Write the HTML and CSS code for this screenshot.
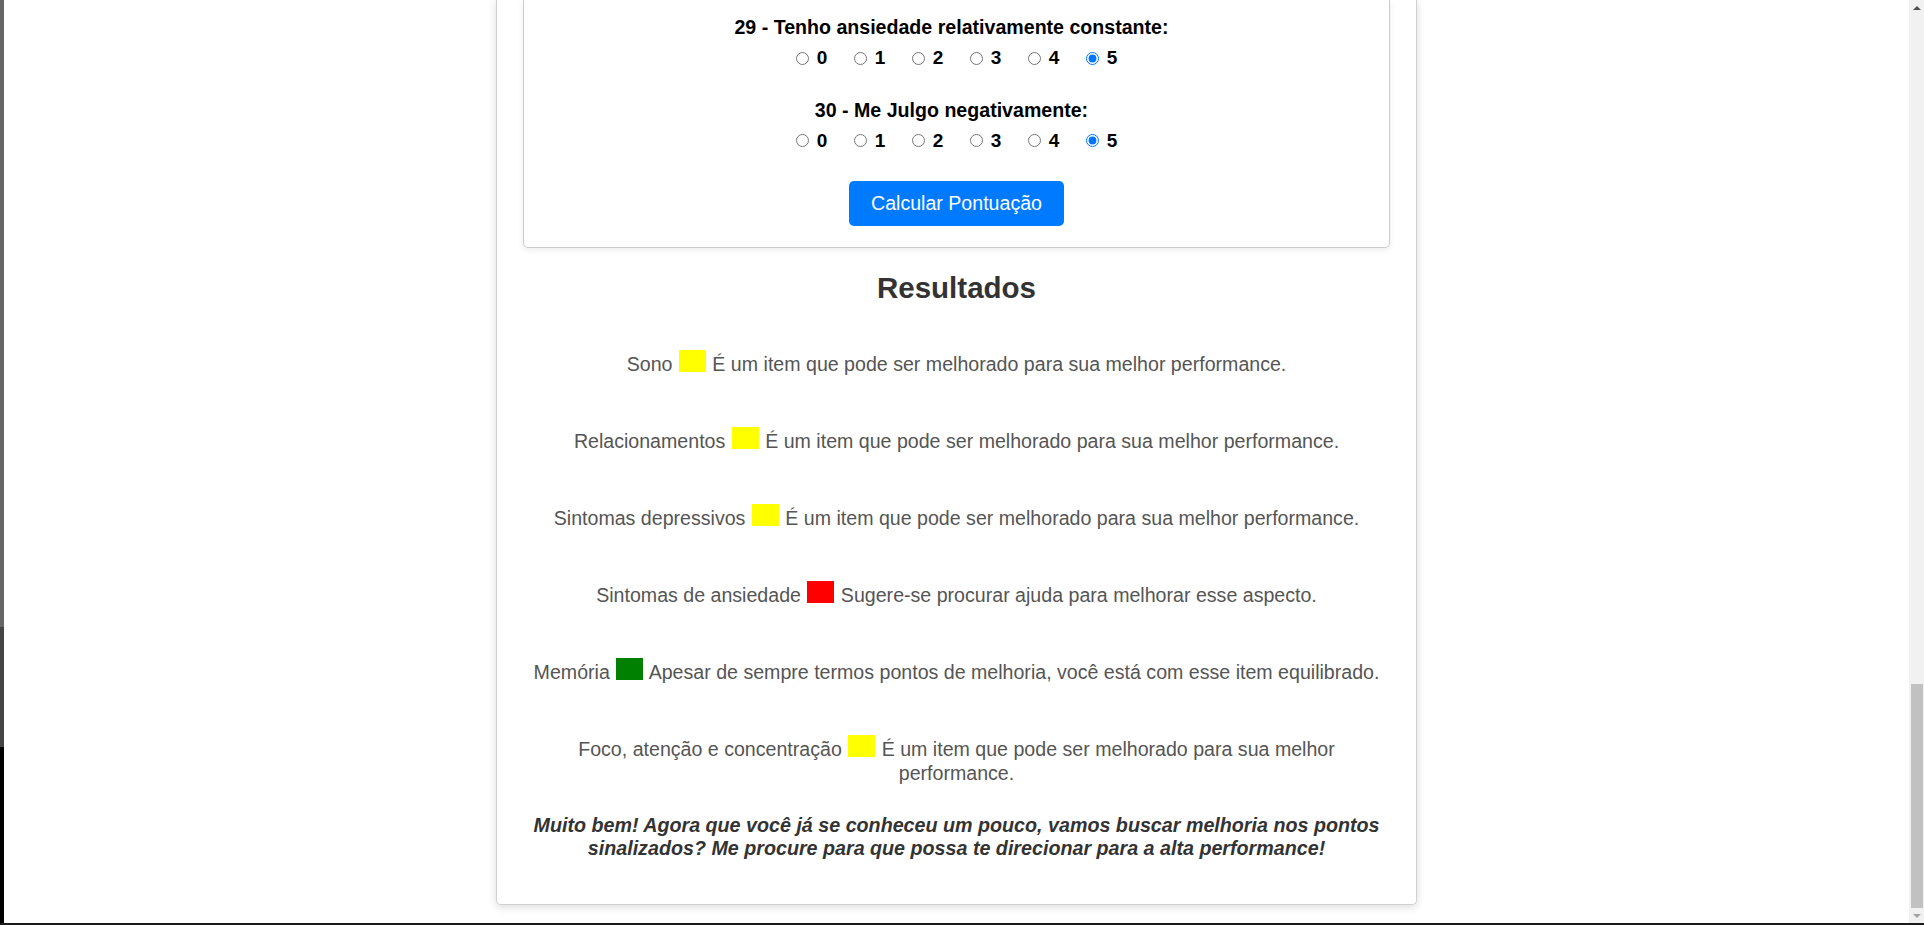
FILE: index.html
```html
<!DOCTYPE html>
<html lang="pt-BR">
<head>
<meta charset="utf-8">
<title>Resultados</title>
<link rel="stylesheet" href="styles.css">
</head>
<body>
<div class="window">
  <div class="edge">
    <div class="edge-top"></div>
    <div class="edge-mid"></div>
    <div class="edge-bottom"></div>
  </div>
  <main class="page">
    <div class="container">
      <form class="quiz">
        <div class="question">
          <p class="q-label">29 - Tenho ansiedade relativamente constante:</p>
          <div class="options">
            <label class="opt"><input type="radio" name="q29" value="0"><span>0</span></label>
            <label class="opt"><input type="radio" name="q29" value="1"><span>1</span></label>
            <label class="opt"><input type="radio" name="q29" value="2"><span>2</span></label>
            <label class="opt"><input type="radio" name="q29" value="3"><span>3</span></label>
            <label class="opt"><input type="radio" name="q29" value="4"><span>4</span></label>
            <label class="opt"><input type="radio" name="q29" value="5" checked><span>5</span></label>
          </div>
        </div>
        <div class="question">
          <p class="q-label">30 - Me Julgo negativamente:</p>
          <div class="options">
            <label class="opt"><input type="radio" name="q30" value="0"><span>0</span></label>
            <label class="opt"><input type="radio" name="q30" value="1"><span>1</span></label>
            <label class="opt"><input type="radio" name="q30" value="2"><span>2</span></label>
            <label class="opt"><input type="radio" name="q30" value="3"><span>3</span></label>
            <label class="opt"><input type="radio" name="q30" value="4"><span>4</span></label>
            <label class="opt"><input type="radio" name="q30" value="5" checked><span>5</span></label>
          </div>
        </div>
        <div class="actions"><button type="button" class="btn">Calcular Pontuação</button></div>
      </form>

      <h2 class="results-title">Resultados</h2>
      <div class="results">
        <p class="result">Sono <span class="swatch yellow"></span> É um item que pode ser melhorado para sua melhor performance.</p>
        <p class="result">Relacionamentos <span class="swatch yellow"></span> É um item que pode ser melhorado para sua melhor performance.</p>
        <p class="result">Sintomas depressivos <span class="swatch yellow"></span> É um item que pode ser melhorado para sua melhor performance.</p>
        <p class="result">Sintomas de ansiedade <span class="swatch red"></span> Sugere-se procurar ajuda para melhorar esse aspecto.</p>
        <p class="result">Memória <span class="swatch green"></span> Apesar de sempre termos pontos de melhoria, você está com esse item equilibrado.</p>
        <p class="result">Foco, atenção e concentração <span class="swatch yellow"></span> É um item que pode ser melhorado para sua melhor performance.</p>
      </div>
      <p class="closing">Muito bem! Agora que você já se conheceu um pouco, vamos buscar melhoria nos pontos sinalizados? Me procure para que possa te direcionar para a alta performance!</p>
    </div>
  </main>
  <div class="scrollbar">
    <div class="sb-btn"><svg width="8" height="4" viewBox="0 0 8 4"><path d="M0 4 L4 0 L8 4 Z" fill="#505050"/></svg></div>
    <div class="sb-track"><div class="sb-thumb"></div></div>
    <div class="sb-btn"><svg width="8" height="4" viewBox="0 0 8 4"><path d="M0 0 L8 0 L4 4 Z" fill="#a3a3a3"/></svg></div>
  </div>
</div>
<div class="bottom-line"></div>
</body>
</html>
```
FILE: styles.css
```css
html, body {
  margin: 0;
  padding: 0;
}

body {
  height: 925px;
  display: flex;
  flex-direction: column;
  overflow: hidden;
  background: #fff;
  font-family: "Liberation Sans", Arial, Helvetica, sans-serif;
}

.window {
  flex: 1;
  display: flex;
  min-height: 0;
}

.edge {
  width: 4px;
  display: flex;
  flex-direction: column;
}

.edge-top {
  height: 627px;
  background: #666;
}

.edge-mid {
  height: 120px;
  background: #444;
}

.edge-bottom {
  flex: 1;
  background: #000;
}

.page {
  flex: 1;
  min-width: 0;
  overflow: hidden;
  background: #fff;
}

.container {
  width: 921px;
  box-sizing: border-box;
  margin: 0 auto;
  padding: 0 26px 44px;
  border: 1px solid #d0d0d0;
  border-top: 0;
  border-radius: 0 0 5px 5px;
  box-shadow: 0 2px 8px rgba(0, 0, 0, 0.15);
  background: #fff;
}

.quiz {
  border: 1px solid #ccc;
  border-top: 0;
  border-radius: 0 0 5px 5px;
  box-shadow: 0 2px 6px rgba(0, 0, 0, 0.08);
  padding: 16px 0 21px;
  text-align: center;
}

.question {
  margin-bottom: 29.7px;
}

.q-label {
  margin: 0 0 8px;
  padding-right: 10px;
  font-size: 19.6px;
  font-weight: bold;
  color: #000;
}

.options {
  display: flex;
  justify-content: center;
  gap: 16.4px;
}

.opt {
  display: flex;
  align-items: center;
  gap: 8px;
  padding: 0 5px;
  font-size: 19px;
  font-weight: bold;
  color: #000;
}

.opt input {
  margin: 0;
  width: 13px;
  height: 13px;
}

.actions {
  margin-top: 1px;
}

.btn {
  font-family: inherit;
  font-size: 19.6px;
  line-height: 23px;
  padding: 11px 22px;
  color: #fff;
  background: #007bff;
  border: 0;
  border-radius: 5px;
}

.results-title {
  margin: 23px 0 0;
  font-size: 29.5px;
  font-weight: bold;
  line-height: normal;
  color: #333;
  text-align: center;
}

.results {
  margin-top: 46.2px;
  display: flex;
  flex-direction: column;
  gap: 53px;
}

.result {
  margin: 0;
  font-size: 19.6px;
  line-height: 24px;
  color: #555;
  text-align: center;
}

.swatch {
  display: inline-block;
  width: 27px;
  height: 22px;
  margin: -3px 1px 0;
  vertical-align: -1px;
}

.yellow { background: #ffff00; }
.red { background: #ff0000; }
.green { background: #008000; }

.closing {
  margin: 29.5px 0 0;
  font-size: 19.7px;
  font-weight: bold;
  font-style: italic;
  line-height: normal;
  color: #333;
  text-align: center;
}

.scrollbar {
  width: 15px;
  background: #f1f1f1;
  display: flex;
  flex-direction: column;
}

.sb-btn {
  height: 15px;
  display: flex;
  align-items: center;
  justify-content: center;
}

.sb-track {
  flex: 1;
  display: flex;
  flex-direction: column;
  justify-content: flex-end;
}

.sb-thumb {
  height: 224px;
  margin: 0 1px 0 2px;
  background: #c1c1c1;
}

.bottom-line {
  height: 2px;
  background: #1a1a1a;
}
```
